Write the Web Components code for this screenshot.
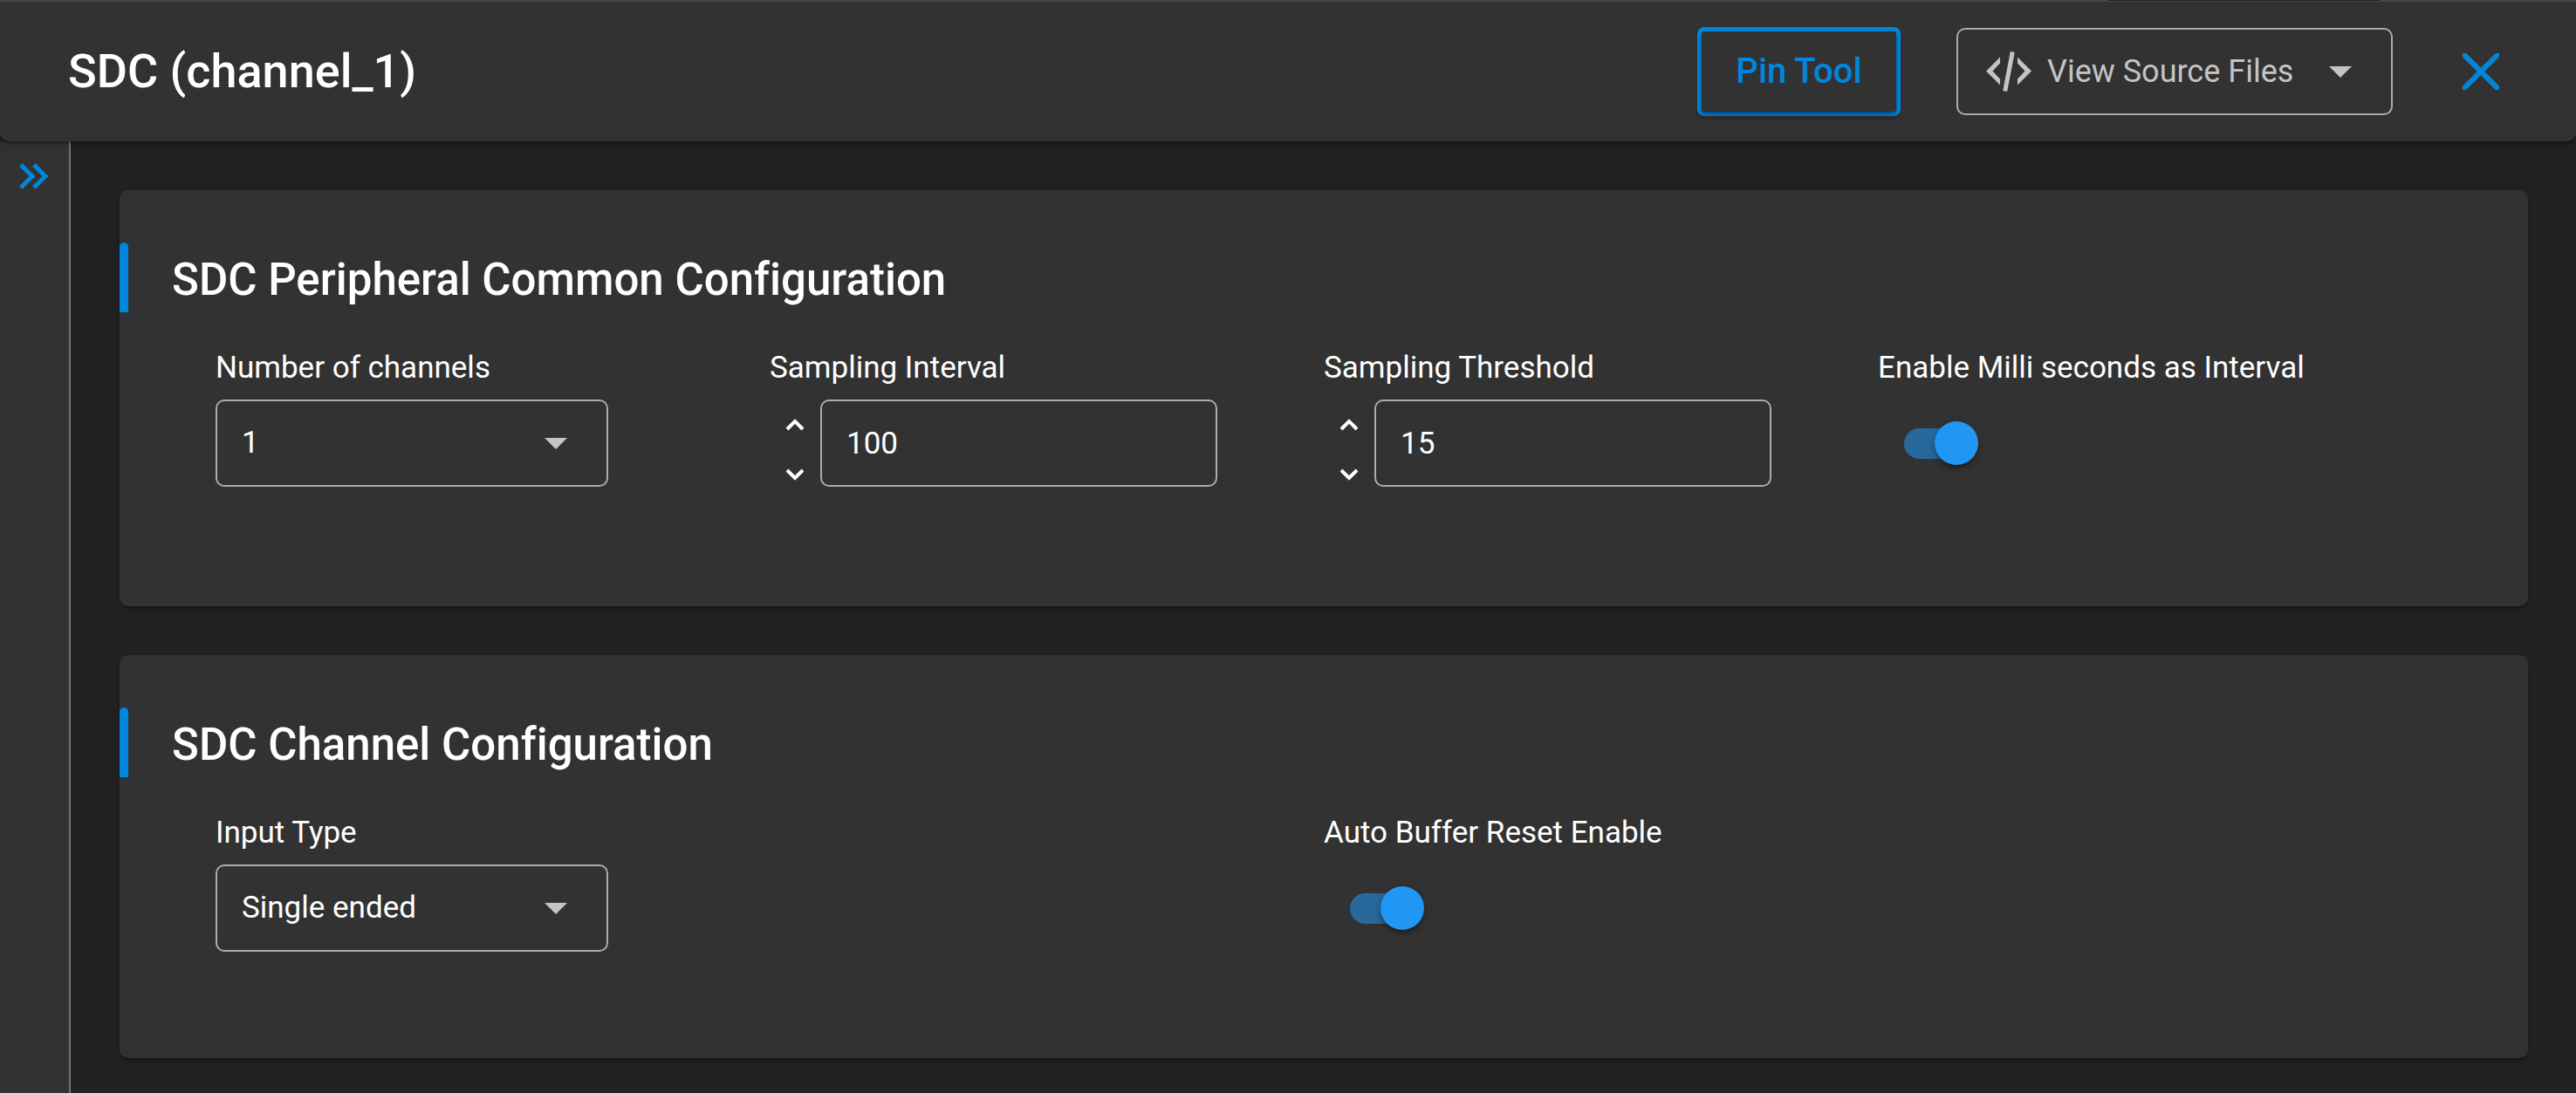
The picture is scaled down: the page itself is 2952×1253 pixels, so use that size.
<!DOCTYPE html>
<html lang="en">
<head>
<meta charset="utf-8">
<title>SDC (channel_1)</title>
<style>
  :root {
    --surface: #323232;
    --canvas: #222222;
    --accent: #0086dc;
    --switch: #2196f3;
    --outline: #acacac;
    --muted: #c4c4c4;
    --text: #ffffff;
    --elevation: 0 5px 3px -3px rgba(0,0,0,.2), 0 3px 3px 0 rgba(0,0,0,.14), 0 3px 13px 0 rgba(0,0,0,.12);
  }
  body {
    margin: 0;
    min-height: 100vh;
    background: var(--canvas);
    color: var(--text);
    font: 400 35px/50px Roboto, sans-serif;
    font-variant-ligatures: none;
  }
</style>
</head>
<body>
<config-page>
  <config-header slot="header" heading="SDC (channel_1)">
    <pin-button>Pin Tool</pin-button>
    <source-menu>View Source Files</source-menu>
    <close-button></close-button>
  </config-header>
  <side-rail slot="rail"></side-rail>
  <config-card heading="SDC Peripheral Common Configuration">
    <select-field label="Number of channels" options="1,2"></select-field>
    <number-field label="Sampling Interval" value="100"></number-field>
    <number-field label="Sampling Threshold" value="15"></number-field>
    <switch-field label="Enable Milli seconds as Interval"></switch-field>
  </config-card>
  <config-card heading="SDC Channel Configuration" compact>
    <select-field label="Input Type" options="Single ended,Differential"></select-field>
    <empty-cell></empty-cell>
    <switch-field label="Auto Buffer Reset Enable"></switch-field>
  </config-card>
</config-page>

<script>
const base = `<style>
  :host, *, *::before, *::after { box-sizing: border-box; }
  button, input, select { font: inherit; color: inherit; margin: 0; }
  button { cursor: pointer; background: none; border: 0; padding: 0; }
  svg { display: block; }
  label { display: block; white-space: nowrap; }
</style>`;

function define(name, render) {
  customElements.define(name, class extends HTMLElement {
    connectedCallback() {
      if (this.shadowRoot) return;
      this.attachShadow({ mode: 'open' }).innerHTML = base + render(this);
    }
  });
}

define('config-page', () => `<style>
  :host { display: flex; flex-direction: column; min-height: 100vh; }
  .body { display: flex; flex: 1; }
  main { flex: 1; min-width: 0; display: flex; flex-direction: column; gap: 56px; padding: 56px 55px 40px 56px; }
</style>
<slot name="header"></slot>
<div class="body"><slot name="rail"></slot><main><slot></slot></main></div>`);

define('config-header', el => `<style>
  :host { display: block; position: relative; z-index: 1; }
  header { display: flex; align-items: center; justify-content: space-between; height: 162px;
    padding: 2px 78px 0; border-radius: 0 0 10px 10px; box-shadow: var(--elevation);
    background:
      linear-gradient(var(--canvas), var(--canvas)) right 225px top / 311px 1px no-repeat,
      linear-gradient(#494949, #494949) top / 100% 2px no-repeat,
      var(--surface); }
  h1 { margin: 0; font-size: 54px; line-height: 60px; font-weight: 500; }
  .actions { display: flex; align-items: center; gap: 64px; }
</style>
<header><h1>${el.getAttribute('heading')}</h1><div class="actions"><slot></slot></div></header>`);

define('pin-button', () => `<style>
  :host { display: block; padding: 5px; border-radius: 8px; background: var(--accent);
    box-shadow: 0 5px 5px rgba(0,0,0,.12); }
  button { display: block; width: 223px; height: 92px; border-radius: 3px; background: var(--surface);
    color: var(--accent); font-size: 40px; font-weight: 500; box-shadow: 0 3px 4px rgba(0,0,0,.45); }
</style><button type="button"><slot></slot></button>`);

define('source-menu', () => `<style>
  :host { display: block; }
  button { display: flex; align-items: center; width: 500px; height: 100px; padding: 0 45px 0 32px;
    border: 2px solid var(--outline); border-radius: 10px; color: var(--muted); font-size: 36px; }
  .code { margin-right: 18px; }
  .caret { margin-left: auto; }
</style>
<button type="button" aria-haspopup="menu">
  <svg class="code" width="52" height="46" viewBox="0 0 52 46"><path fill="currentColor" d="M16 6.500v7L7.500 22.500 16 31.500v7L0 22.500zM36 6.500v7l8.500 9-8.500 9v7l16-16z"/><path fill="none" stroke="currentColor" stroke-width="5" d="M30.300.500l-8.600 45"/></svg>
  <slot></slot>
  <svg class="caret" width="26" height="13" viewBox="0 0 26 13" fill="currentColor"><path d="M0 0h26L13 13z"/></svg>
</button>`);

define('close-button', () => `<style>
  :host { display: block; color: var(--accent); }
  button { display: block; padding: 10px 10px 10px 16px; }
</style>
<button type="button" aria-label="Close"><svg width="42" height="42" viewBox="0 0 42 42" fill="none" stroke="currentColor" stroke-width="6"><path d="M-2-2l46 46M44-2L-2 44"/></svg></button>`);

define('side-rail', () => `<style>
  :host { display: block; width: 81px; background: var(--surface); border-right: 2px solid #727272; color: var(--accent); }
  button { display: block; padding: 25px 22px; }
</style>
<button type="button" aria-label="Expand panel"><svg width="34" height="30" viewBox="0 0 34 30" fill="none" stroke="currentColor" stroke-width="5"><path d="M2 2l13 13L2 28M17 2l13 13-13 13"/></svg></button>`);

define('config-card', el => `<style>
  :host { display: block; padding: 60px 0 137px; border-radius: 10px; background: var(--surface); box-shadow: var(--elevation); }
  :host([compact]) { padding-bottom: 122px; }
  .head { display: flex; align-items: center; height: 80px; }
  .head::before { content: ""; width: 10px; height: 80px; border-radius: 5px 5px 0 0; background: var(--accent); }
  h2 { margin: 0 0 0 50px; padding-top: 5px; font-size: 51px; line-height: 60px; font-weight: 500; }
  .fields { display: grid; grid-template-columns: repeat(4, 1fr); padding: 39px 110px 0; }
</style>
<section><div class="head"><h2>${el.getAttribute('heading')}</h2></div><div class="fields"><slot></slot></div></section>`);

define('empty-cell', () => `<style>:host { display: block; }</style>`);

define('select-field', el => `<style>
  :host { display: block; }
  label { padding-bottom: 11px; }
  .box { display: grid; align-items: center; width: 450px; max-width: 100%; }
  select, svg { grid-area: 1 / 1; }
  select { appearance: none; width: 100%; height: 100px; padding: 0 80px 0 28px; border: 2px solid var(--outline);
    border-radius: 10px; background: transparent; }
  option { background: #323232; }
  svg { justify-self: end; margin-right: 47px; color: var(--muted); pointer-events: none; }
</style>
<label for="f">${el.getAttribute('label')}</label>
<div class="box"><select id="f">${el.getAttribute('options').split(',').map(o => `<option>${o}</option>`).join('')}</select>
<svg width="26" height="13" viewBox="0 0 26 13" fill="currentColor"><path d="M0 0h26L13 13z"/></svg></div>`);

define('number-field', el => `<style>
  :host { display: block; }
  label { padding-bottom: 11px; }
  .box { display: flex; align-items: center; }
  .steps { display: flex; flex-direction: column; gap: 43px; width: 58px; padding: 14px 0 0 18px; }
  input { width: 455px; min-width: 0; height: 100px; padding: 0 28px; border: 2px solid var(--outline);
    border-radius: 10px; background: transparent; }
</style>
<label for="f">${el.getAttribute('label')}</label>
<div class="box"><div class="steps">
  <button type="button" aria-label="Increase"><svg width="22" height="15" viewBox="0 0 22 15" fill="none" stroke="currentColor" stroke-width="4"><path d="M2 13l9-9 9 9"/></svg></button>
  <button type="button" aria-label="Decrease"><svg width="22" height="15" viewBox="0 0 22 15" fill="none" stroke="currentColor" stroke-width="4"><path d="M2 2l9 9 9-9"/></svg></button>
</div><input id="f" type="text" inputmode="numeric" value="${el.getAttribute('value')}"></div>`);

define('switch-field', el => `<style>
  :host { display: block; }
  label { padding-bottom: 11px; }
  .box { display: flex; align-items: center; height: 100px; padding-left: 30px; }
  input { appearance: none; display: flex; align-items: center; justify-content: flex-end; width: 80px; height: 35px;
    border-radius: 18px; background: #29689b; cursor: pointer; }
  input::before { content: ""; flex: none; width: 50px; height: 50px; margin-right: -5px; border-radius: 50%;
    background: var(--switch); box-shadow: 0 5px 5px -2px rgba(0,0,0,.2), 0 3px 5px rgba(0,0,0,.2), 0 2px 12px rgba(0,0,0,.12); }
  input:not(:checked) { justify-content: flex-start; background: #6b6b6b; }
  input:not(:checked)::before { margin: 0 0 0 -5px; background: #bdbdbd; }
</style>
<label for="f">${el.getAttribute('label')}</label>
<div class="box"><input id="f" type="checkbox" role="switch" checked></div>`);
</script>
</body>
</html>
